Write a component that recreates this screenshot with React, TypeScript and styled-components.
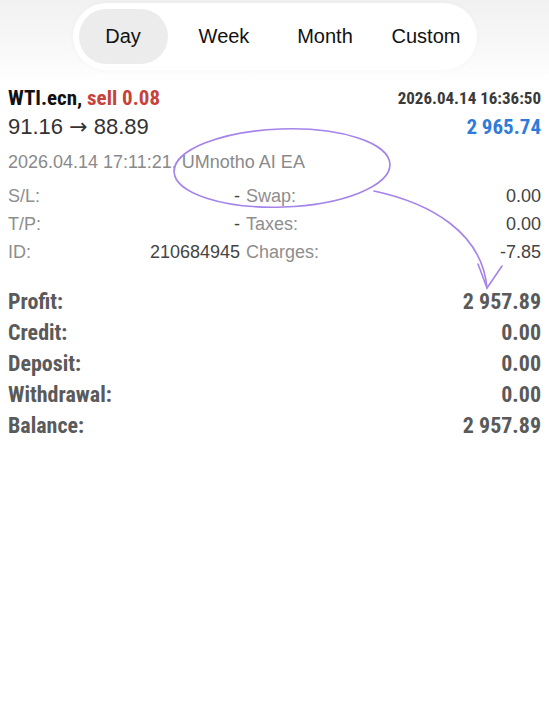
import styled, { createGlobalStyle } from "styled-components";

const GlobalStyle = createGlobalStyle`
  body {
    margin: 0;
    background: #fff;
    font-family: "Liberation Sans", Arial, sans-serif;
  }
`;

const periods = ["Day", "Week", "Month", "Custom"];

const details = [
  { label: "S/L:", value: "-", label2: "Swap:", value2: "0.00" },
  { label: "T/P:", value: "-", label2: "Taxes:", value2: "0.00" },
  { label: "ID:", value: "210684945", label2: "Charges:", value2: "-7.85" },
];

const totals = [
  { label: "Profit:", value: "2 957.89" },
  { label: "Credit:", value: "0.00" },
  { label: "Deposit:", value: "0.00" },
  { label: "Withdrawal:", value: "0.00" },
  { label: "Balance:", value: "2 957.89" },
];

const App = () => {
  return (
    <Page>
      <GlobalStyle />
      <TopBar>
        <Segmented>
          {periods.map((p) => (
            <Segment key={p} $active={p === "Day"}>
              {p}
            </Segment>
          ))}
        </Segmented>
      </TopBar>

      <Deal>
        <Row $h={29}>
          <Symbol>
            WTI.ecn, <Sell>sell 0.08</Sell>
          </Symbol>
          <OpenTime>2026.04.14 16:36:50</OpenTime>
        </Row>
        <Row $h={30}>
          <Prices>
            91.16 <Arrow>→</Arrow> 88.89
          </Prices>
          <Result>2 965.74</Result>
        </Row>
        <Comment>2026.04.14 17:11:21, UMnotho AI EA</Comment>
        <DetailGrid>
          {details.map((d) => (
            <DetailRow key={d.label}>
              <DetailCell>
                <Label>{d.label}</Label>
                <Value>{d.value}</Value>
              </DetailCell>
              <DetailCell>
                <Label>{d.label2}</Label>
                <Value>{d.value2}</Value>
              </DetailCell>
            </DetailRow>
          ))}
        </DetailGrid>
      </Deal>

      <Totals>
        {totals.map((t) => (
          <TotalRow key={t.label}>
            <span>{t.label}</span>
            <span>{t.value}</span>
          </TotalRow>
        ))}
      </Totals>

      <Annotation width="549" height="720" viewBox="0 0 549 720">
        <g fill="none" stroke="#a483ea" strokeWidth="1.6" strokeLinecap="round">
          <ellipse cx="282" cy="168" rx="108" ry="39" transform="rotate(-2 282 168)" />
          <path d="M374 191 C 430 203, 482 232, 487 288" />
          <path d="M478 264 L 487 288 L 502 266" />
        </g>
      </Annotation>
    </Page>
  );
};

const Page = styled.div`
  position: relative;
  width: 549px;
  min-height: 720px;
  background: #fff;
`;

const TopBar = styled.div`
  display: flex;
  justify-content: center;
  padding: 3px 0 13px;
  background: linear-gradient(#f1f1f1, #fafafa 70%, #fff);
`;

const Segmented = styled.div`
  display: grid;
  grid-template-columns: repeat(4, 101px);
  width: 404px;
  height: 67px;
  box-sizing: border-box;
  padding: 6px 0;
  background: #fff;
  border-radius: 34px;
  box-shadow: 0 0 6px rgba(0, 0, 0, 0.03);
`;

const Segment = styled.div<{ $active?: boolean }>`
  display: flex;
  align-items: center;
  justify-content: center;
  margin: 0 6px;
  border-radius: 28px;
  font-size: 20px;
  color: #111;
  background: ${(p) => (p.$active ? "#ececec" : "transparent")};
`;

const Deal = styled.div`
  padding: 0 8px;
`;

const Row = styled.div<{ $h: number }>`
  display: flex;
  align-items: center;
  justify-content: space-between;
  height: ${(p) => p.$h}px;
`;

const Condensed = styled.span`
  font-family: "Liberation Sans Narrow", "Roboto Condensed", "Liberation Sans", sans-serif;
  font-weight: bold;
  font-stretch: condensed;
`;

const Symbol = styled(Condensed)`
  font-size: 21px;
  color: #111;
`;

const Sell = styled.span`
  color: #c7423a;
`;

const OpenTime = styled(Condensed)`
  font-size: 17px;
  color: #3a3a3a;
`;

const Prices = styled.span`
  font-size: 22px;
  color: #333;
`;

const Arrow = styled.span`
  font-family: "DejaVu Sans", sans-serif;
  font-size: 22px;
`;

const Result = styled(Condensed)`
  font-size: 21px;
  color: #2f7bd9;
`;

const Comment = styled.div`
  height: 40px;
  display: flex;
  align-items: center;
  font-size: 18px;
  color: #8a8a8a;
`;

const DetailGrid = styled.div`
  display: flex;
  flex-direction: column;
`;

const DetailRow = styled.div`
  display: grid;
  grid-template-columns: 232px 1fr;
  column-gap: 6px;
  height: 28px;
  align-items: center;
  font-size: 18px;
`;

const DetailCell = styled.div`
  display: flex;
  justify-content: space-between;
`;

const Label = styled.span`
  color: #8e8e8e;
`;

const Value = styled.span`
  color: #444;
`;

const Totals = styled.div`
  padding: 20px 8px 0;
  display: flex;
  flex-direction: column;
`;

const TotalRow = styled.div`
  display: flex;
  justify-content: space-between;
  align-items: center;
  height: 31px;
  font-family: "Liberation Sans Narrow", "Roboto Condensed", "Liberation Sans", sans-serif;
  font-weight: bold;
  font-stretch: condensed;
  font-size: 22px;
  color: #5a5a5a;
`;

const Annotation = styled.svg`
  position: absolute;
  left: 0;
  top: 0;
  pointer-events: none;
`;

export default App;
